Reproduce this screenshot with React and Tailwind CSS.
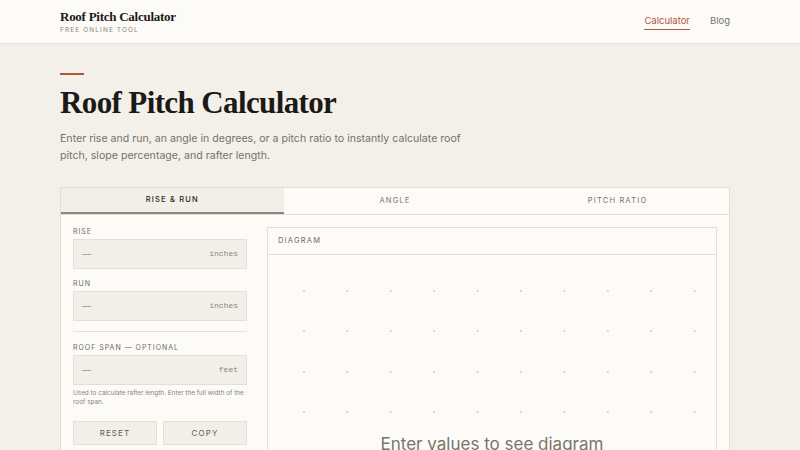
import React from "react";

const serif = { fontFamily: '"Liberation Serif", "DejaVu Serif", serif' };

const Field = ({ label, unit }) => (
  <div className="flex flex-col">
    <div className="text-[7px] leading-[10px] tracking-[0.14em] text-[#6f6a63] uppercase mb-[2px]">{label}</div>
    <div className="h-[30px] bg-[#f2efe9] border border-[#e3dfd7] flex items-center justify-between px-[8px]">
      <span className="text-[9px] text-[#9a948c]">—</span>
      <span className="text-[8px] text-[#8a847c] font-['Liberation_Mono',monospace]">{unit}</span>
    </div>
  </div>
);

const Dots = () => {
  const cols = Array.from({ length: 10 }, (_, i) => 36 + i * 43.4);
  const rows = [36, 76, 117, 157];
  return (
    <svg width="450" height="200" className="absolute left-0 top-0" aria-hidden="true">
      {rows.map((y) =>
        cols.map((x) => <circle key={`${x}-${y}`} cx={x} cy={y} r="1" fill="#d2ccc2" />)
      )}
    </svg>
  );
};

export default function App() {
  return (
    <div className="h-[450px] bg-[#f3f0ea] font-['Inter','Open_Sans',sans-serif] overflow-hidden">
      <header className="h-[44px] bg-[#fcfbf8] border-b border-[#e6e2da]">
        <div className="w-[670px] ml-[60px] h-full flex items-center justify-between">
          <div className="flex flex-col pt-[2px]">
            <div className="text-[13px] leading-[14px] font-bold text-[#1c1a17] tracking-[-0.02em]" style={serif}>
              Roof Pitch Calculator
            </div>
            <div className="text-[6.5px] leading-[9px] tracking-[0.17em] text-[#8a847c] mt-[2px]">FREE ONLINE TOOL</div>
          </div>
          <nav className="flex items-center gap-[20px] text-[9.5px] pt-[1px]">
            <span className="text-[#b5553d] border-b border-[#b5553d] pb-[1px]">Calculator</span>
            <span className="text-[#7a746c] pb-[2px]">Blog</span>
          </nav>
        </div>
      </header>

      <main className="w-[670px] ml-[60px] pt-[29px]">
        <div className="w-[24px] h-[2px] bg-[#b5553d]" />
        <h1 className="mt-[10px] text-[31px] leading-[35px] font-bold text-[#1c1a17] tracking-[-0.02em]" style={serif}>
          Roof Pitch Calculator
        </h1>
        <p className="mt-[10px] w-[410px] text-[10.6px] leading-[17px] text-[#77716a]">
          Enter rise and run, an angle in degrees, or a pitch ratio to instantly calculate roof pitch, slope percentage, and rafter length.
        </p>

        <div className="mt-[23px] bg-[#fcfbf8] border border-[#e3dfd7] h-[300px]">
          <div className="grid grid-cols-3 h-[27px] border-b border-[#e3dfd7] text-[7.5px] tracking-[0.16em] uppercase">
            <div className="bg-[#f2efe9] border-b-2 border-[#8c867e] flex items-center justify-center text-[#2a2723] font-medium">
              Rise &amp; Run
            </div>
            <div className="flex items-center justify-center text-[#7a746c]">Angle</div>
            <div className="flex items-center justify-center text-[#7a746c]">Pitch Ratio</div>
          </div>

          <div className="flex gap-[20px] px-[12px] pt-[12px]">
            <div className="w-[174px] flex flex-col">
              <Field label="Rise" unit="inches" />
              <div className="mt-[10px]">
                <Field label="Run" unit="inches" />
              </div>
              <div className="h-px bg-[#e3dfd7] mt-[10px]" />
              <div className="mt-[11px]">
                <Field label="Roof span — optional" unit="feet" />
              </div>
              <p className="mt-[4px] text-[6.4px] leading-[9px] text-[#8a847c]">
                Used to calculate rafter length. Enter the full width of the roof span.
              </p>
              <div className="mt-[14px] grid grid-cols-2 gap-[6px]">
                <button className="h-[24px] bg-[#f2efe9] border border-[#e3dfd7] text-[8px] tracking-[0.14em] text-[#5f5a53]">RESET</button>
                <button className="h-[24px] bg-[#f2efe9] border border-[#e3dfd7] text-[8px] tracking-[0.14em] text-[#5f5a53]">COPY</button>
              </div>
            </div>

            <div className="flex-1 border border-[#e3dfd7] h-[260px] flex flex-col">
              <div className="h-[27px] border-b border-[#e3dfd7] flex items-center px-[10px] text-[7.5px] tracking-[0.16em] text-[#6f6a63]">
                DIAGRAM
              </div>
              <div className="relative flex-1">
                <Dots />
                <div className="absolute left-0 right-0 top-[177px] text-center text-[17px] leading-[24px] text-[#7a746c]">
                  Enter values to see diagram
                </div>
              </div>
            </div>
          </div>
        </div>
      </main>
    </div>
  );
}
